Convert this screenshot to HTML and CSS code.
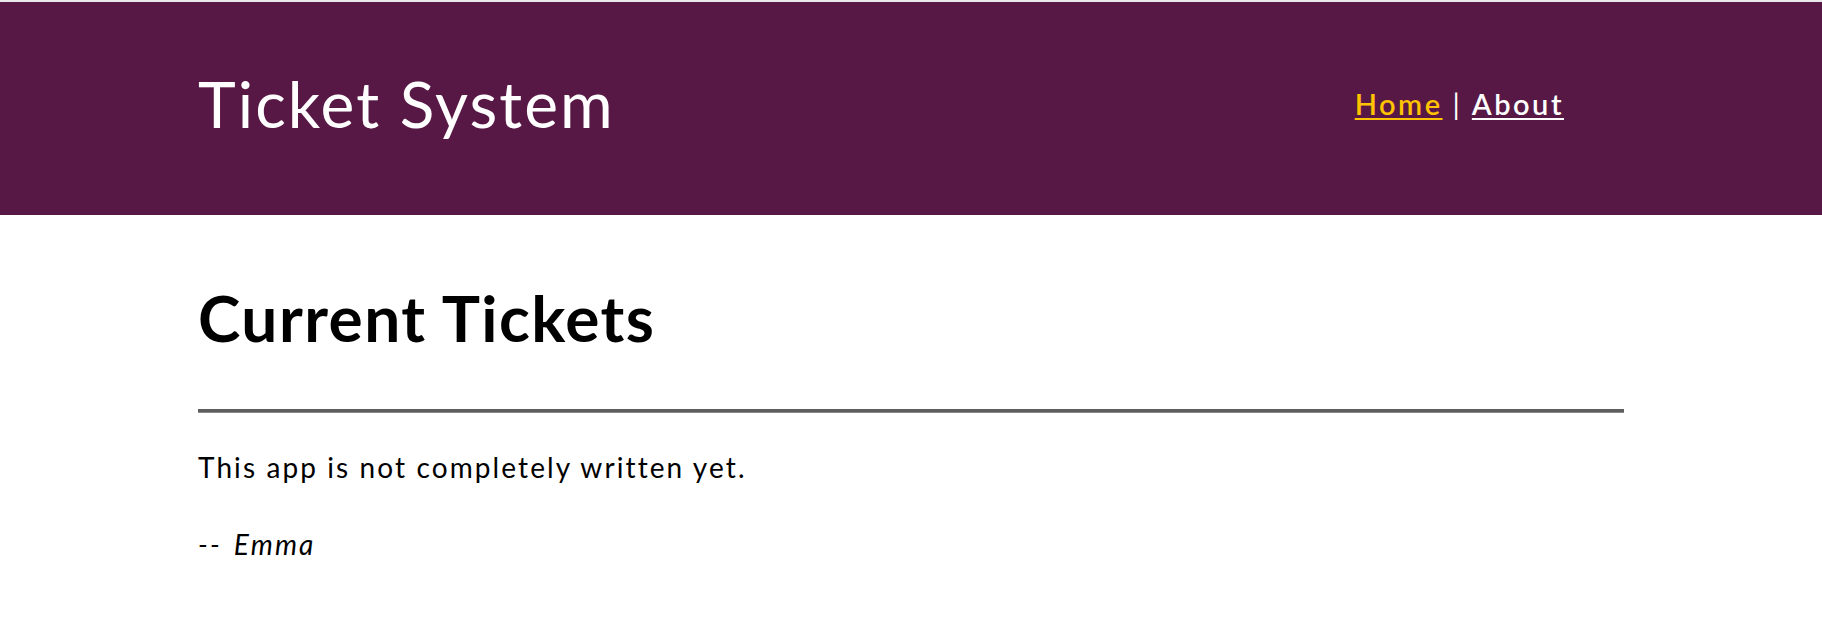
FILE: index.html
```html
<!DOCTYPE html>
<html lang="en">
<head>
<meta charset="utf-8">
<title>Ticket System</title>
<link rel="stylesheet" href="styles.css">
</head>
<body>
<div class="topband"></div>
<header class="site-header">
  <div class="container header-inner">
    <div class="brand">Ticket System</div>
    <nav class="nav"><a class="nav-link active" href="#">Home</a><span class="sep">|</span><a class="nav-link" href="#">About</a></nav>
  </div>
</header>
<main class="container content">
  <h1 class="page-title">Current Tickets</h1>
  <hr class="rule">
  <p class="para">This app is not completely written yet.</p>
  <p class="para sig"><em>-- Emma</em></p>
</main>
</body>
</html>
```
FILE: styles.css
```css
html, body {
  margin: 0;
  padding: 0;
  background: #ffffff;
  color: #000000;
  font-family: "Lato", "Noto Sans", sans-serif;
}
.topband {
  height: 2px;
  background: #e9e9e9;
}
.site-header {
  background: #581845;
  height: 213px;
}
.container {
  width: 1426px;
  margin: 0 auto;
}
.header-inner {
  display: flex;
  justify-content: space-between;
  align-items: flex-start;
  padding-top: 70px;
}
.brand {
  color: #ffffff;
  font-size: 64px;
  line-height: 64px;
  letter-spacing: 2.1px;
}
.nav {
  display: flex;
  align-items: baseline;
  margin-top: 18px;
  margin-right: 60px;
  font-size: 29px;
  line-height: 28px;
  font-weight: 600;
  color: #ffffff;
}
.nav-link {
  color: #ffffff;
  text-decoration: underline;
  text-decoration-thickness: 2px;
  text-underline-offset: 3px;
  letter-spacing: 2.5px;
}
.nav-link.active {
  color: #ffc300;
}
.sep {
  font-weight: 400;
  padding: 0 12px 0 10px;
}
.content {
  padding-top: 71px;
}
.page-title {
  margin: 0;
  font-size: 64px;
  line-height: 64px;
  font-weight: 700;
  letter-spacing: 1.45px;
}
.rule {
  margin: 59px 0 0 0;
  border: 0;
  border-top: 3px solid #5e5e5e;
  border-bottom: 1px solid #8a8a8a;
  height: 0;
}
.para {
  margin: 40px 0 0 0;
  font-size: 28px;
  line-height: 28px;
  letter-spacing: 2.1px;
}
.sig {
  margin-top: 49px;
  letter-spacing: 2.2px;
  word-spacing: 3px;
}
```
